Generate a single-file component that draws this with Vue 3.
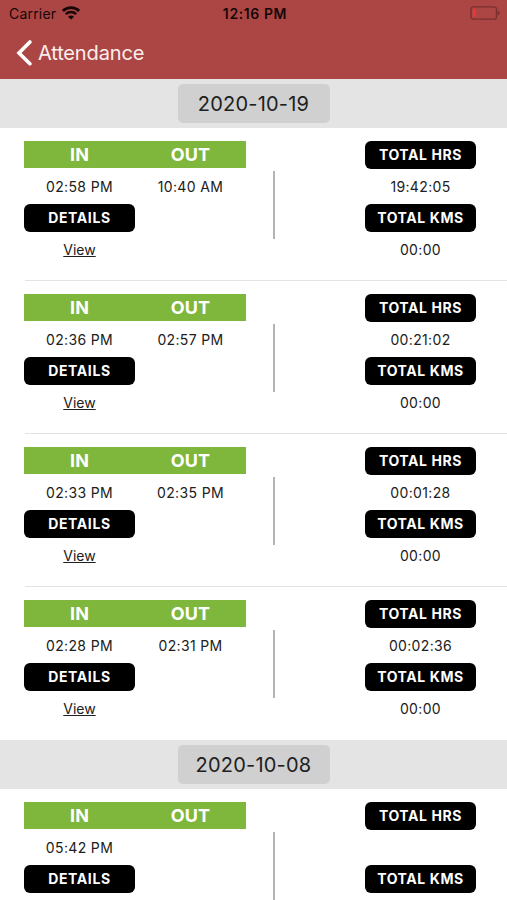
<script setup>
const groups = [
  {
    date: '2020-10-19',
    entries: [
      { in: '02:58 PM', out: '10:40 AM', hours: '19:42:05', kms: '00:00', link: 'View' },
      { in: '02:36 PM', out: '02:57 PM', hours: '00:21:02', kms: '00:00', link: 'View' },
      { in: '02:33 PM', out: '02:35 PM', hours: '00:01:28', kms: '00:00', link: 'View' },
      { in: '02:28 PM', out: '02:31 PM', hours: '00:02:36', kms: '00:00', link: 'View' },
    ],
  },
  {
    date: '2020-10-08',
    entries: [{ in: '05:42 PM', out: '', hours: '', kms: '', link: '' }],
  },
]
</script>

<template>
  <div class="screen">
    <header class="top">
      <div class="status">
        <div class="network">
          <span class="carrier">Carrier</span>
          <svg class="wifi" width="18" height="14" viewBox="0 0 18 14">
            <path d="M.8 4.9C5.3.5 12.7.5 17.2 4.9" fill="none" stroke="#160606" stroke-width="2.8" />
            <path d="M3.8 8.1c2.9-2.8 7.5-2.8 10.4 0" fill="none" stroke="#160606" stroke-width="2.5" />
            <path d="M6 10.7c1.7-1.6 4.3-1.6 6 0l-3 2.9z" fill="#160606" />
          </svg>
        </div>
        <span class="clock">12:16 PM</span>
        <svg class="battery" width="32" height="16" viewBox="0 0 32 16">
          <rect x="2" y="1.8" width="25.5" height="12.4" rx="2.5" fill="none" stroke="#7b2f2f" stroke-width="1.3" />
          <rect x="4" y="3.9" width="2.4" height="8.2" rx="0.8" fill="#f5333d" />
          <path d="M28.6 5.1 31 8l-2.4 2.9z" fill="#7b2f2f" />
        </svg>
      </div>
      <nav class="nav">
        <svg class="back" width="18" height="28" viewBox="0 0 18 28">
          <path d="M15.9 3 5 14l10.9 10.7" fill="none" stroke="#fff" stroke-width="3.6" stroke-linecap="round" stroke-linejoin="miter" />
        </svg>
        <span class="title">Attendance</span>
      </nav>
    </header>

    <section v-for="group in groups" :key="group.date">
      <div class="day"><span class="date">{{ group.date }}</span></div>
      <article v-for="(entry, i) in group.entries" :key="i" class="entry">
        <div class="times">
          <div class="label green">IN</div>
          <div class="label green">OUT</div>
          <div class="value">{{ entry.in }}</div>
          <div class="value">{{ entry.out }}</div>
          <div class="label black">DETAILS</div>
          <div></div>
          <a v-if="entry.link" class="value view">{{ entry.link }}</a>
        </div>
        <div class="divider"></div>
        <div class="totals">
          <div class="label black">TOTAL HRS</div>
          <div class="value">{{ entry.hours }}</div>
          <div class="label black">TOTAL KMS</div>
          <div class="value">{{ entry.kms }}</div>
        </div>
      </article>
    </section>
  </div>
</template>

<style>
body {
  margin: 0;
  overflow: hidden;
}
</style>

<style scoped>
.screen {
  width: 507px;
  height: 900px;
  overflow: hidden;
  background: #fff;
  color: #202020;
  font-family: Inter, "Liberation Sans", sans-serif;
}
.top {
  height: 79px;
  background: #ac4644;
}
.status {
  display: grid;
  grid-template-columns: 1fr auto 1fr;
  align-items: center;
  height: 27px;
  padding: 0 6px 0 9px;
  color: #160606;
}
.network {
  display: flex;
  align-items: center;
  gap: 6px;
}
.carrier {
  font-size: 14px;
  letter-spacing: 0.2px;
}
.wifi {
  margin-top: -2px;
}
.clock {
  font-size: 14px;
  font-weight: 600;
  letter-spacing: 0.6px;
}
.battery {
  justify-self: end;
  margin-top: -1px;
}
.nav {
  display: flex;
  align-items: center;
  height: 52px;
  padding-left: 14px;
  gap: 6px;
  color: #fbeeee;
}
.title {
  font-size: 20px;
  letter-spacing: -0.15px;
}
.day {
  display: flex;
  justify-content: center;
  align-items: center;
  height: 49px;
  background: #e4e4e4;
}
.date {
  width: 152px;
  height: 39px;
  border-radius: 5px;
  background: #d0d0d0;
  font-size: 20px;
  letter-spacing: 0.2px;
  line-height: 41px;
  text-align: center;
}
.entry {
  display: flex;
  box-sizing: border-box;
  height: 153px;
  padding: 13px 31px 0 24px;
  background: linear-gradient(#e3e3e3, #e3e3e3) 25px 152px / 100% 1px no-repeat;
}
.entry:last-child {
  background: none;
}
.times {
  display: grid;
  grid-template-columns: 111px 111px;
  grid-template-rows: 27px 36px 27px 36px;
}
.totals {
  display: grid;
  grid-template-columns: 111px;
  grid-template-rows: 27px 36px 27px 36px;
  margin-left: auto;
}
.label {
  color: #fff;
  text-align: center;
  line-height: 28px;
}
.green {
  height: 27px;
  background: #7fb63c;
  font-size: 18px;
  font-weight: 700;
  letter-spacing: 0.2px;
}
.black {
  height: 27.5px;
  border-radius: 6px;
  background: #000;
  font-size: 14px;
  font-weight: 700;
  letter-spacing: 0.6px;
}
.value {
  font-size: 14px;
  letter-spacing: 0.35px;
  line-height: 38px;
  text-align: center;
}
.view {
  letter-spacing: 0;
  text-decoration: underline;
}
.divider {
  width: 2px;
  height: 68px;
  margin: 30px 0 0 27px;
  background: #b4b4b4;
}
</style>
